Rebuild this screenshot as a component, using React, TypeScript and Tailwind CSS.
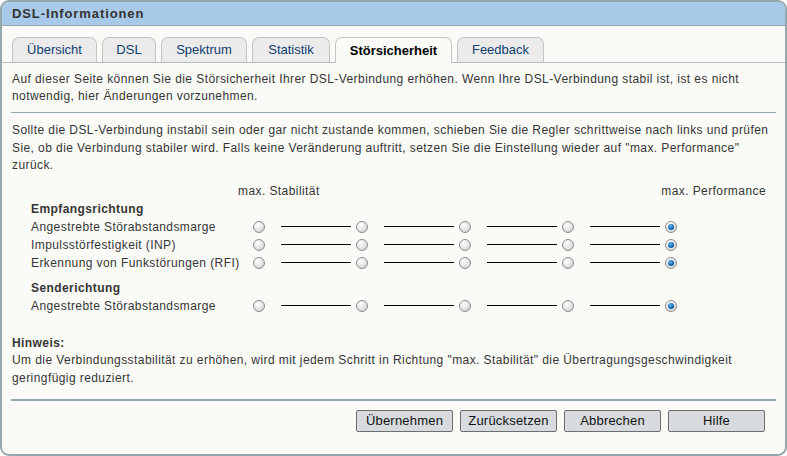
import { Fragment } from "react";

const TABS = [
  { label: "Übersicht", w: "w-[85px]" },
  { label: "DSL", w: "w-[54px]" },
  { label: "Spektrum", w: "w-[86px]" },
  { label: "Statistik", w: "w-[78px]" },
  { label: "Störsicherheit", w: "w-[117px]", active: true },
  { label: "Feedback", w: "w-[87px]" },
];

function Radio({ on }: { on?: boolean }) {
  return (
    <span className="relative block h-[12px] w-[12px] shrink-0 rounded-full border border-[#8e8e8e] bg-[radial-gradient(circle_at_35%_30%,#ffffff_0%,#e8e8e8_45%,#c6c6c6_100%)]">
      {on && (
        <span className="absolute left-[2px] top-[2px] h-[6px] w-[6px] rounded-full bg-[radial-gradient(circle_at_40%_35%,#6ab8ee_0%,#0b63b0_60%,#063c73_100%)]" />
      )}
    </span>
  );
}

function SliderRow({ label }: { label: string }) {
  return (
    <div className="flex h-[18px] items-center pl-[29px]">
      <span className="w-[222px] shrink-0">{label}</span>
      {[0, 1, 2, 3].map((i) => (
        <Fragment key={i}>
          <Radio />
          <span className="ml-[16px] mr-[5px] h-px w-[70px] shrink-0 bg-black" />
        </Fragment>
      ))}
      <Radio on />
    </div>
  );
}

export default function App() {
  return (
    <div className="h-[456px] w-[787px] bg-white font-['Liberation_Sans',Arial,sans-serif] text-[12px] tracking-[0.42px] text-[#363636]">
      <div className="flex h-full flex-col overflow-hidden rounded-[9px] border-2 border-[#93a8aa] bg-[#fafaf7]">
        {/* title bar */}
        <div className="h-[24px] shrink-0 border-b border-[#93a8aa] bg-[#a8c9e8] pl-[10px] text-[13px] font-bold leading-[23px] tracking-[0.9px] text-[#333]">
          DSL-Informationen
        </div>

        {/* tabs */}
        <div className="flex h-[37px] shrink-0 items-end gap-[5px] border-b border-[#b4bebe] pl-[10px] tracking-normal">
          {TABS.map((t) => (
            <div
              key={t.label}
              className={
                t.active
                  ? `${t.w} -mb-px flex h-[26px] items-center justify-center rounded-t-[7px] border border-b-0 border-[#c2c6c6] bg-[#fafaf7] text-[13px] font-bold text-black`
                  : `${t.w} flex h-[25px] items-center justify-center rounded-t-[7px] border border-b-0 border-[#c2c6c6] bg-[#ebebeb] text-[13px] text-[#123d70]`
              }
            >
              {t.label}
            </div>
          ))}
        </div>

        <p className="px-[10px] pt-[8px] leading-[17px]">
          Auf dieser Seite können Sie die Störsicherheit Ihrer DSL-Verbindung erhöhen. Wenn Ihre DSL-Verbindung stabil ist, ist es nicht
          notwendig, hier Änderungen vorzunehmen.
        </p>

        <div className="mx-[9px] mt-[7px] h-px bg-[#93a8aa]" />

        <p className="px-[10px] pt-[9px] leading-[17.5px]">
          Sollte die DSL-Verbindung instabil sein oder gar nicht zustande kommen, schieben Sie die Regler schrittweise nach links und prüfen
          Sie, ob die Verbindung stabiler wird. Falls keine Veränderung auftritt, setzen Sie die Einstellung wieder auf "max. Performance"
          zurück.
        </p>

        <div className="mt-[8px] flex h-[17px] items-center justify-between pl-[236px] pr-[19px] leading-[17px]">
          <span>max. Stabilität</span>
          <span>max. Performance</span>
        </div>

        <div className="h-[18px] pl-[29px] font-bold leading-[18px]">Empfangsrichtung</div>
        <SliderRow label="Angestrebte Störabstandsmarge" />
        <SliderRow label="Impulsstörfestigkeit (INP)" />
        <SliderRow label="Erkennung von Funkstörungen (RFI)" />

        <div className="mt-[7px] h-[18px] pl-[29px] font-bold leading-[18px]">Senderichtung</div>
        <SliderRow label="Angestrebte Störabstandsmarge" />

        <div className="mt-[20px] px-[10px] leading-[17.5px]">
          <div className="font-bold">Hinweis:</div>
          <p>
            Um die Verbindungsstabilität zu erhöhen, wird mit jedem Schritt in Richtung "max. Stabilität" die Übertragungsgeschwindigkeit
            geringfügig reduziert.
          </p>
        </div>

        <div className="mx-[9px] mt-[12px] h-[2px] bg-[#93a8aa]" />

        <div className="mt-[9px] flex justify-end gap-[7px] pr-[20px] tracking-[0.2px]">
          {["Übernehmen", "Zurücksetzen", "Abbrechen", "Hilfe"].map((b) => (
            <button
              key={b}
              className="h-[22px] w-[97px] rounded-[2px] border border-[#6e6e6e] bg-[#d7dbde] text-[13px] leading-[20px] text-[#111]"
            >
              {b}
            </button>
          ))}
        </div>
      </div>
    </div>
  );
}
